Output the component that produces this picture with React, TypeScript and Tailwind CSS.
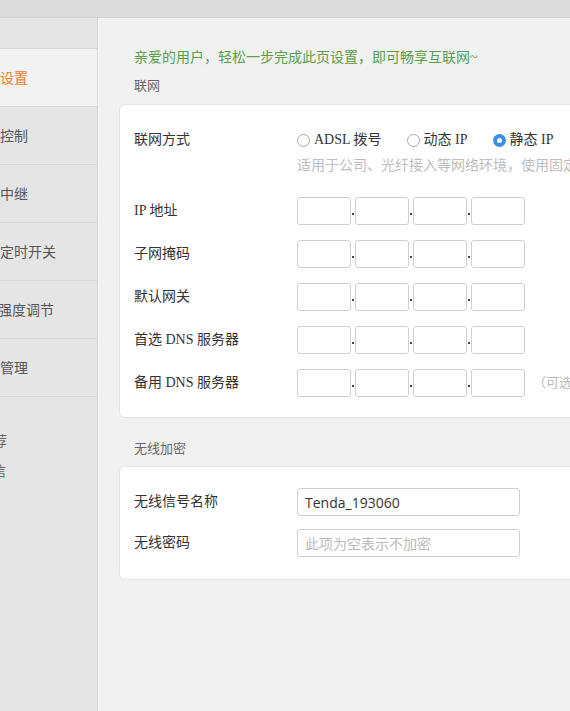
const cjk = 'font-["Liberation_Serif","Noto_Sans_CJK_SC",serif]';

const navItems = [
  { text: '上网设置', offset: '-ml-[28px]', active: true },
  { text: '家长控制', offset: '-ml-[28px]' },
  { text: '无线中继', offset: '-ml-[28px]' },
  { text: '无线定时开关', offset: '-ml-[28px]' },
  { text: '信号强度调节', offset: '-ml-[30px]' },
  { text: '系统管理', offset: '-ml-[28px]' },
];

const ipRows = ['IP 地址', '子网掩码', '默认网关', '首选 DNS 服务器', '备用 DNS 服务器'];

function Radio({ checked, label }: { checked?: boolean; label: string }) {
  return (
    <label className="flex items-center gap-[4px]">
      {checked ? (
        <span className="w-[13px] h-[13px] rounded-full bg-[#3b8ee6] flex items-center justify-center">
          <span className="w-[5px] h-[5px] rounded-full bg-white" />
        </span>
      ) : (
        <span className="w-[13px] h-[13px] rounded-full border border-[#a9a9a9] bg-white" />
      )}
      <span>{label}</span>
    </label>
  );
}

function IpInput({ note }: { note?: string }) {
  return (
    <div className="flex items-center">
      {[0, 1, 2, 3].map((i) => (
        <div key={i} className="flex items-center">
          {i > 0 && (
            <div className="w-[4px] h-[28px] flex justify-center items-center">
              <span className="w-[2px] h-[2px] mt-[6px] bg-[#444]" />
            </div>
          )}
          <input className="w-[54px] h-[28px] rounded-[3px] border border-[#cfcfcf] bg-white outline-none" />
        </div>
      ))}
      {note && <span className="ml-[8px] text-[13px] text-[#bbb]">{note}</span>}
    </div>
  );
}

export default function App() {
  return (
    <div className={`w-[570px] h-[711px] overflow-hidden flex flex-col bg-[#f1f1f1] ${cjk}`}>
      {/* top bar */}
      <div className="h-[18px] shrink-0 bg-[#dcdcdc] border-b border-[#d0d0d0]" />

      <div className="flex flex-1 min-h-0">
        {/* sidebar */}
        <div className="w-[98px] shrink-0 bg-[#e5e5e5] border-r border-[#d3d3d3] overflow-hidden text-[14px] text-[#555]">
          <div className="h-[31px] border-b border-[#d8d8d8]" />
          {navItems.map((item) => (
            <div
              key={item.text}
              className={`h-[58px] pt-[2px] flex items-center whitespace-nowrap border-b border-[#d8d8d8] ${
                item.active ? 'bg-[#f2f2f2] text-[#ef7b2e]' : ''
              }`}
            >
              <span className={item.offset}>{item.text}</span>
            </div>
          ))}
          <div className="pt-[35px] flex flex-col gap-[10px] whitespace-nowrap text-[#666]">
            <span className="-ml-[49px] leading-[20px]">产品推荐</span>
            <span className="-ml-[22px] leading-[20px]">微信</span>
          </div>
        </div>

        {/* main */}
        <div className="flex-1 overflow-hidden border-l border-[#fafafa]">
          <div className="w-[700px] pl-[20px] pt-[30px] text-[14px] leading-[20px]">
            <div className="pl-[15px] text-[#58a04e]">亲爱的用户，轻松一步完成此页设置，即可畅享互联网~</div>
            <div className="pl-[15px] mt-[8px] text-[13px] text-[#666]">联网</div>

            <div className="mt-[8px] bg-white border border-[#e4e4e4] rounded-[6px] pl-[14px] pt-[25px] pb-[20px] text-[#333]">
              <div className="flex">
                <div className="w-[163px]">联网方式</div>
                <div className="flex flex-col">
                  <div className="flex items-center gap-[25px]">
                    <Radio label="ADSL 拨号" />
                    <Radio label="动态 IP" />
                    <Radio checked label="静态 IP" />
                  </div>
                  <div className="mt-[6px] text-[14px] text-[#bdbdbd] whitespace-nowrap">
                    适用于公司、光纤接入等网络环境，使用固定IP地址上网
                  </div>
                </div>
              </div>

              <div className="mt-[21px] flex flex-col gap-[15px]">
                {ipRows.map((label, i) => (
                  <div key={label} className="flex items-center">
                    <div className="w-[163px]">{label}</div>
                    <IpInput note={i === 4 ? '（可选）' : undefined} />
                  </div>
                ))}
              </div>
            </div>

            <div className="pl-[15px] mt-[21px] text-[13px] text-[#666]">无线加密</div>

            <div className="mt-[7px] bg-white border border-[#e4e4e4] rounded-[6px] pl-[14px] pt-[21px] pb-[22px] text-[#333] flex flex-col gap-[13px]">
              <div className="flex items-center">
                <div className="w-[163px]">无线信号名称</div>
                <input
                  defaultValue="Tenda_193060"
                  className='w-[223px] h-[28px] px-[7px] rounded-[3px] border border-[#cfcfcf] bg-white outline-none text-[14px] text-[#333] font-["Open_Sans","Noto_Sans_CJK_SC",sans-serif]'
                />
              </div>
              <div className="flex items-center">
                <div className="w-[163px]">无线密码</div>
                <input
                  placeholder="此项为空表示不加密"
                  className='w-[223px] h-[28px] px-[7px] rounded-[3px] border border-[#cfcfcf] bg-white outline-none text-[14px] placeholder:text-[#bbb] font-["Open_Sans","Noto_Sans_CJK_SC",sans-serif]'
                />
              </div>
            </div>
          </div>
        </div>
      </div>
    </div>
  );
}
